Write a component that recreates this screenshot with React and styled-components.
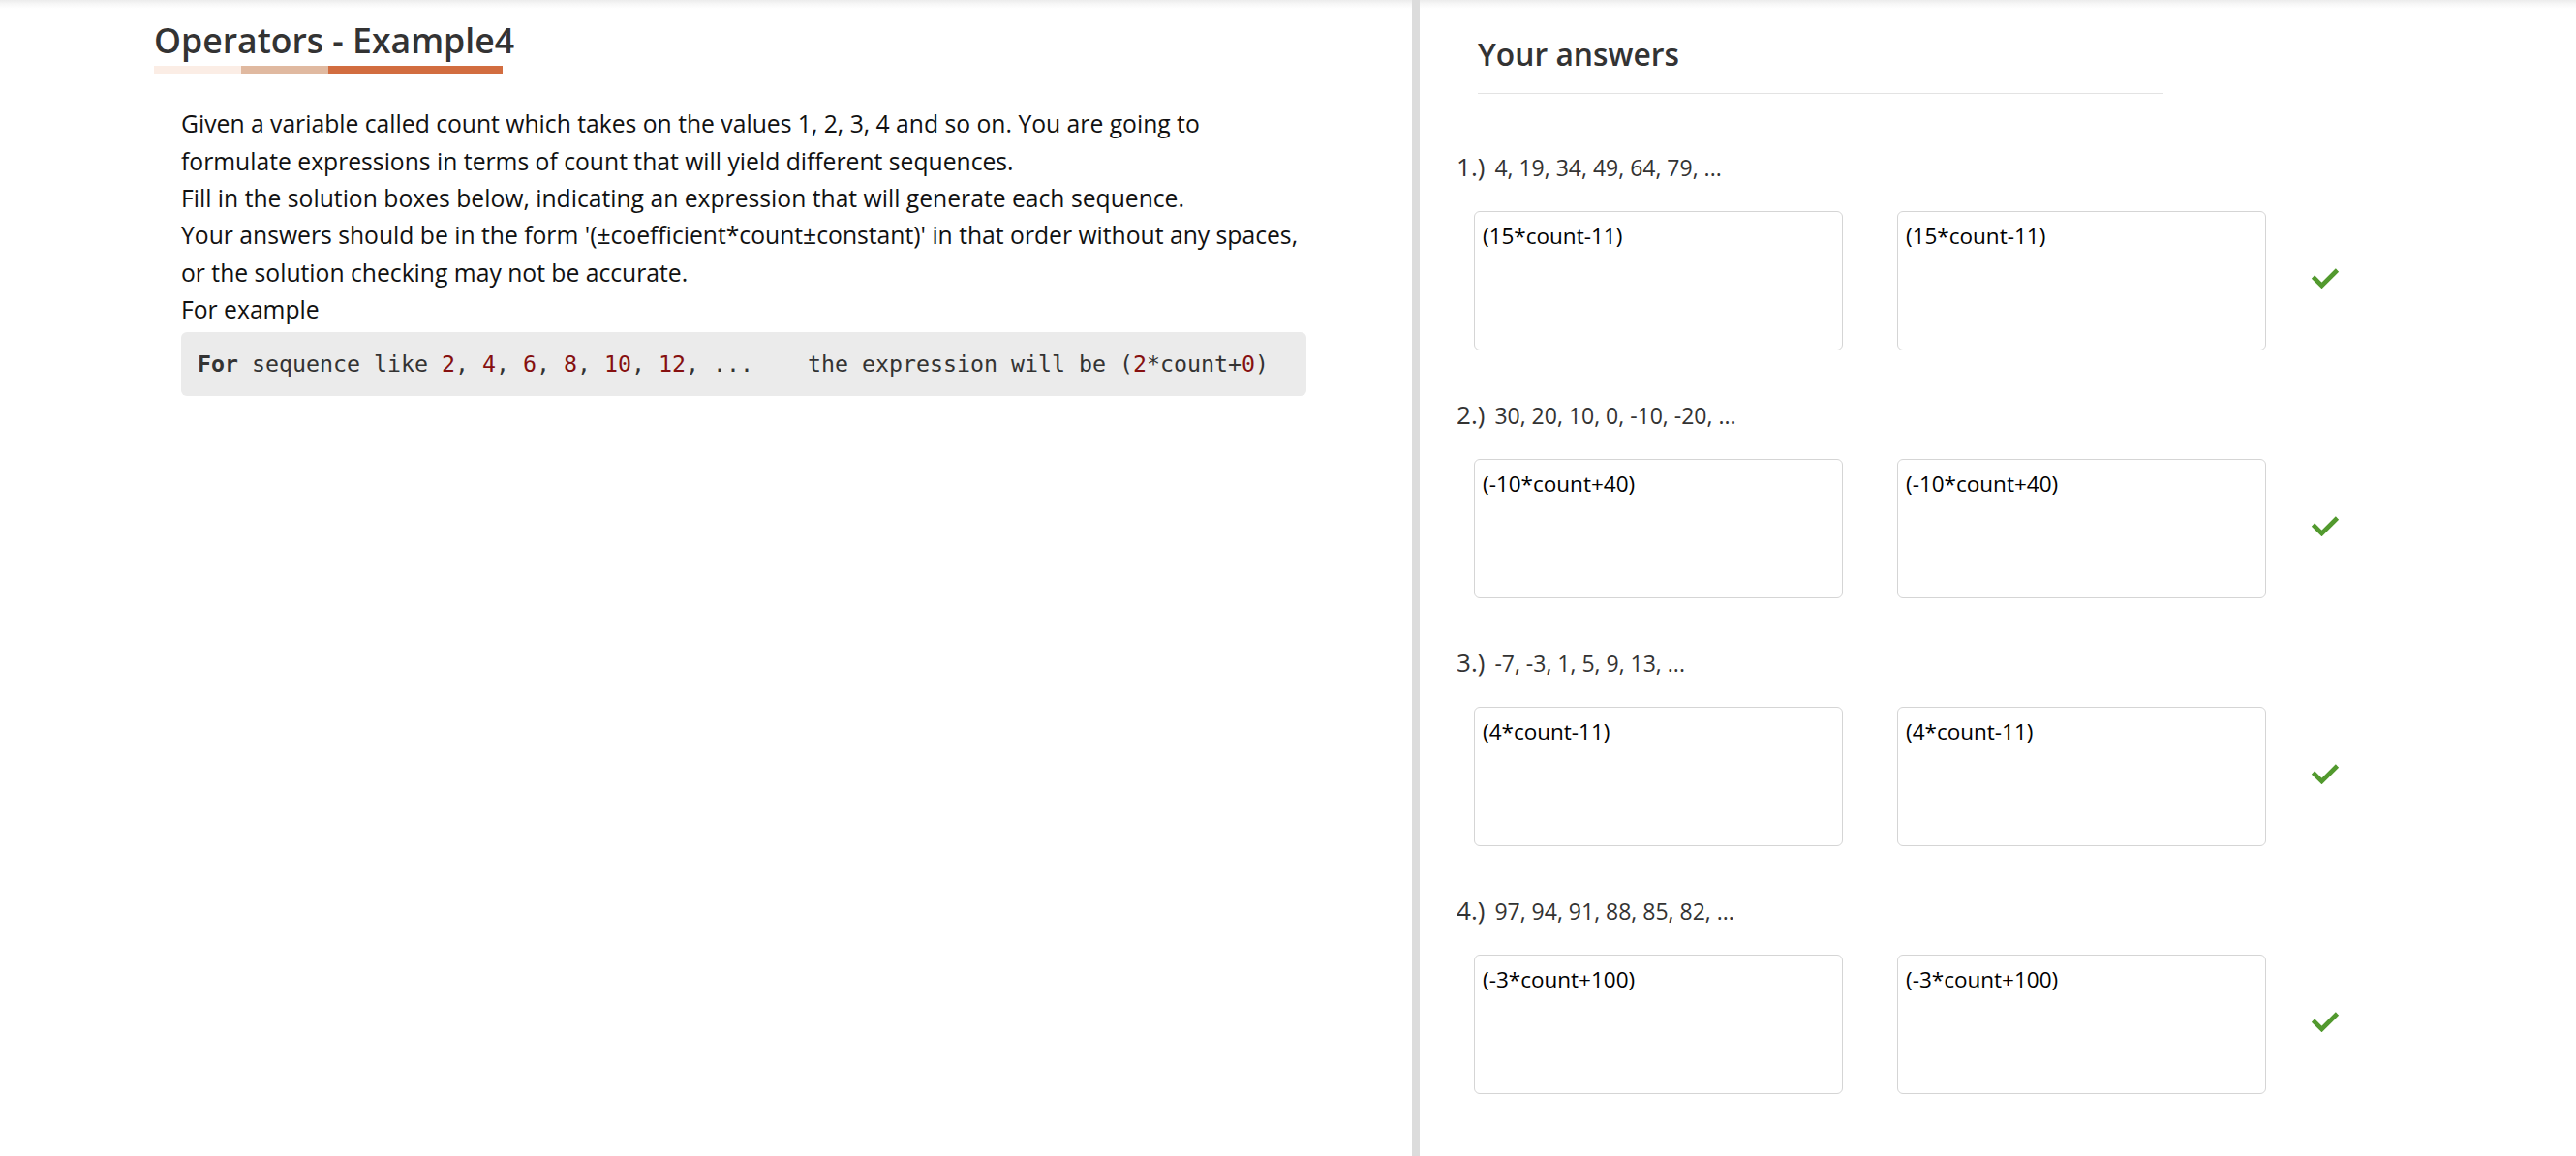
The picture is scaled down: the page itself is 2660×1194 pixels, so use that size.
import React from "react";
import styled, { createGlobalStyle } from "styled-components";

const GlobalStyle = createGlobalStyle`
  html, body { margin: 0; padding: 0; }
  body {
    font-family: "Open Sans", "Noto Sans", sans-serif;
    color: #111;
    background: #fff;
  }
  * { box-sizing: border-box; }
`;

const Page = styled.div`
  display: grid;
  grid-template-columns: 1458px 8px 1fr;
  min-height: 100vh;
  background: linear-gradient(to bottom, #ececec 0px, #f7f7f7 4px, #ffffff 9px);
`;

const LeftPanel = styled.section`
  padding: 20px 0 0 159px;
`;

const Title = styled.h1`
  margin: 0;
  font-family: "Open Sans", sans-serif;
  font-weight: 600;
  font-size: 35.6px;
  line-height: 42.7px;
  color: #333;
  white-space: nowrap;
`;

const TitleBar = styled.div`
  display: flex;
  margin-top: 5px;
  height: 8px;
`;

const BarSegment = styled.span`
  display: block;
  width: ${(p) => p.$w}px;
  background: ${(p) => p.$c};
`;

const Body = styled.div`
  margin: 33.5px 0 0 28px;
  width: 1162px;
`;

const Paragraph = styled.p`
  margin: 0;
  font-size: 24.7px;
  line-height: 38.4px;
  color: #111;
  white-space: nowrap;
`;

const CodeBlock = styled.pre`
  margin: 3.5px 0 0;
  padding: 16px 17px;
  background: #ebebeb;
  border-radius: 6px;
  font-family: "DejaVu Sans Mono", monospace;
  font-size: 23.25px;
  line-height: 34px;
  color: #333;
  white-space: pre;
`;

const Keyword = styled.span`
  font-weight: 700;
  color: #333;
`;

const Num = styled.span`
  color: #861010;
`;

const Divider = styled.div`
  background: #dcdcdc;
`;

const RightPanel = styled.section`
  padding: 36.4px 0 0 38px;
`;

const Header = styled.h2`
  margin: 0 0 0 22px;
  width: 708px;
  padding-bottom: 20px;
  border-bottom: 1px solid #e3e3e3;
  font-family: "Open Sans", sans-serif;
  font-weight: 600;
  font-size: 31.8px;
  line-height: 39.6px;
  color: #333;
`;

const QuestionList = styled.div`
  display: flex;
  flex-direction: column;
  gap: 46px;
  margin-top: 55px;
`;

const Question = styled.div`
  display: flex;
  flex-direction: column;
`;

const QuestionRow = styled.div`
  display: flex;
  align-items: baseline;
  gap: 10px;
  color: #333;
  line-height: 40px;
`;

const Label = styled.span`
  font-size: 26px;
`;

const Sequence = styled.span`
  font-size: 23px;
`;

const AnswerRow = styled.div`
  display: flex;
  align-items: center;
  gap: 56px;
  margin-top: 25px;
  padding-left: 18px;
`;

const AnswerBox = styled.textarea`
  width: 381px;
  height: 144px;
  padding: 9px 8px;
  border: 1px solid #d5d5d5;
  border-radius: 6px;
  font-family: "Open Sans", sans-serif;
  font-size: 22.5px;
  line-height: normal;
  color: #000;
  background: #fff;
  resize: none;
  outline: none;
  overflow: hidden;
`;

const CheckWrap = styled.span`
  display: flex;
  margin-left: -10px;
  margin-top: -6px;
`;

const CheckIcon = () => (
  <svg width="30" height="22" viewBox="0 0 30 22" aria-hidden="true">
    <polyline
      points="2.5,10 11.5,19 27.5,3"
      fill="none"
      stroke="#52992e"
      strokeWidth="4.6"
      strokeLinejoin="miter"
    />
  </svg>
);

const questions = [
  { seq: "4, 19, 34, 49, 64, 79, ...", answer: "(15*count-11)" },
  { seq: "30, 20, 10, 0, -10, -20, ...", answer: "(-10*count+40)" },
  { seq: "-7, -3, 1, 5, 9, 13, ...", answer: "(4*count-11)" },
  { seq: "97, 94, 91, 88, 85, 82, ...", answer: "(-3*count+100)" },
];

export default function App() {
  return (
    <>
      <GlobalStyle />
      <Page>
        <LeftPanel>
          <Title>Operators - Example4</Title>
          <TitleBar>
            <BarSegment $w={90} $c="#fbede5" />
            <BarSegment $w={90} $c="#e0b9a0" />
            <BarSegment $w={180} $c="#d26d40" />
          </TitleBar>
          <Body>
            <Paragraph>
              Given a variable called count which takes on the values 1, 2, 3, 4 and so on. You are going to
              <br />
              formulate expressions in terms of count that will yield different sequences.
              <br />
              Fill in the solution boxes below, indicating an expression that will generate each sequence.
              <br />
              Your answers should be in the form '(±coefficient*count±constant)' in that order without any spaces,
              <br />
              or the solution checking may not be accurate.
              <br />
              For example
            </Paragraph>
            <CodeBlock>
              <Keyword>For</Keyword> sequence like <Num>2</Num>, <Num>4</Num>, <Num>6</Num>, <Num>8</Num>,{" "}
              <Num>10</Num>, <Num>12</Num>, ...{"    "}the expression will be (<Num>2</Num>*count+<Num>0</Num>)
            </CodeBlock>
          </Body>
        </LeftPanel>
        <Divider />
        <RightPanel>
          <Header>Your answers</Header>
          <QuestionList>
            {questions.map((q, i) => (
              <Question key={i}>
                <QuestionRow>
                  <Label>{i + 1}.)</Label>
                  <Sequence>{q.seq}</Sequence>
                </QuestionRow>
                <AnswerRow>
                  <AnswerBox readOnly value={q.answer} />
                  <AnswerBox readOnly value={q.answer} />
                  <CheckWrap>
                    <CheckIcon />
                  </CheckWrap>
                </AnswerRow>
              </Question>
            ))}
          </QuestionList>
        </RightPanel>
      </Page>
    </>
  );
}
